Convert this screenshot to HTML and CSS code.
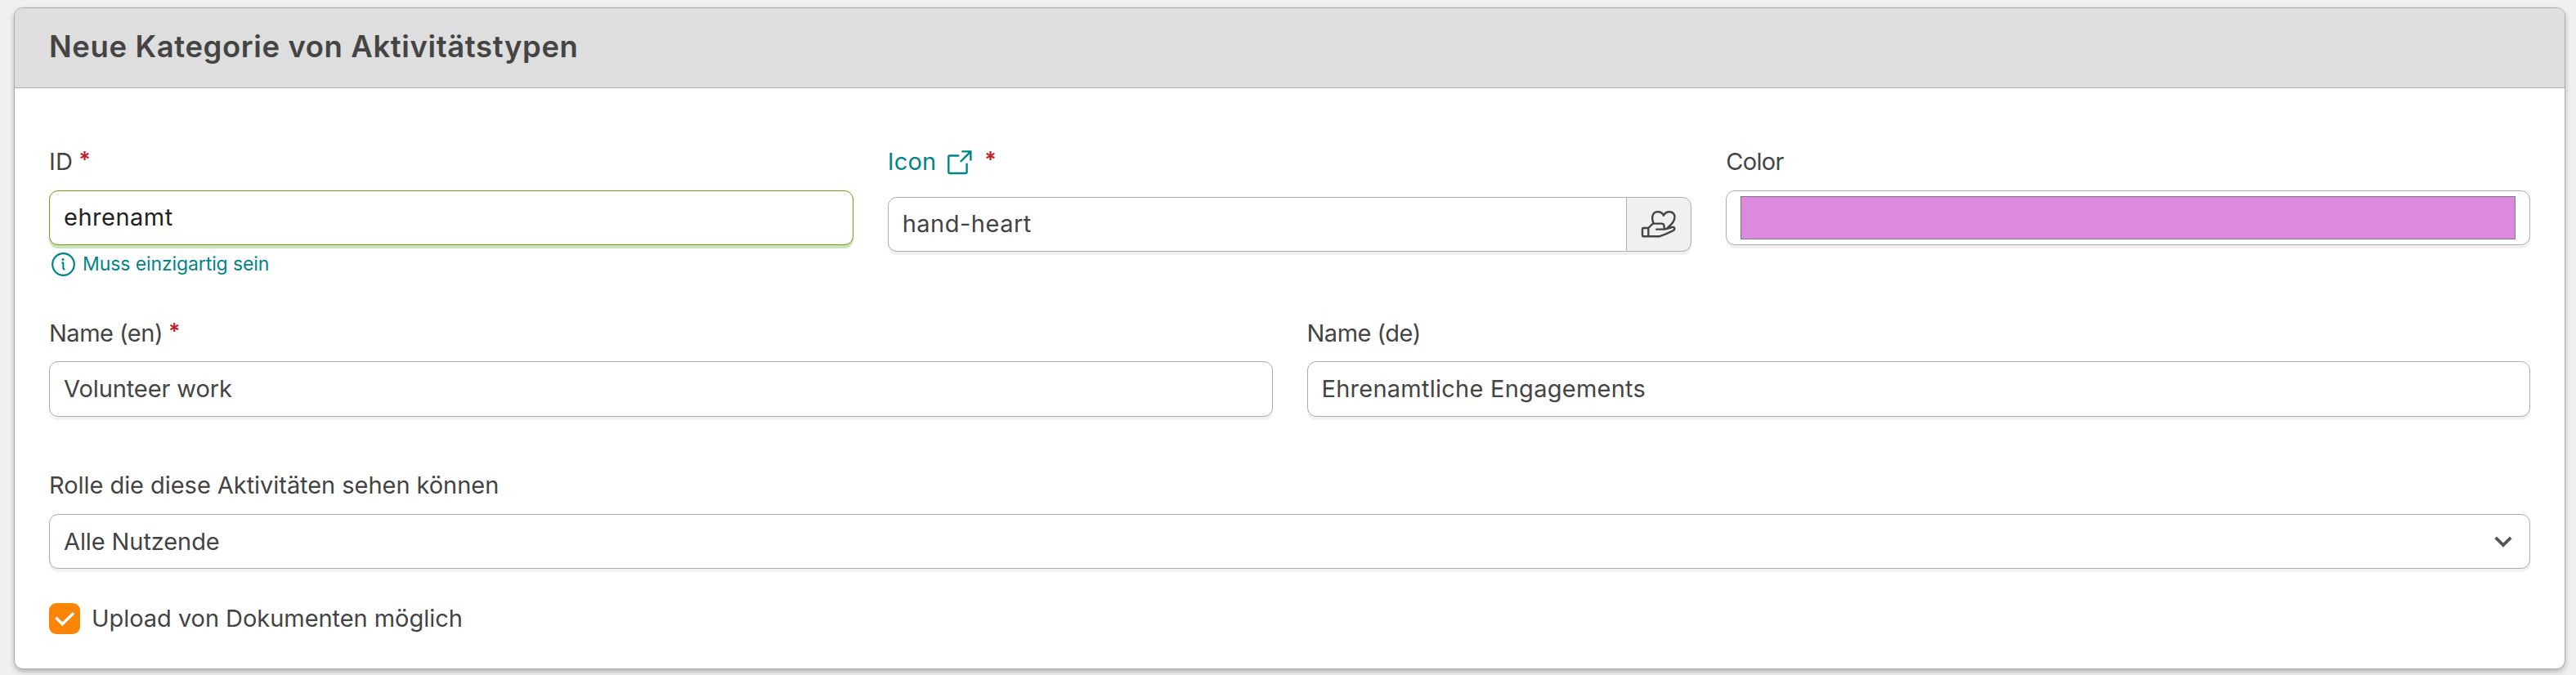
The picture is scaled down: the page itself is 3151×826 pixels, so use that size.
FILE: index.html
```html
<!DOCTYPE html>
<html lang="de">
<head>
<meta charset="utf-8">
<title>Neue Kategorie von Aktivitätstypen</title>
<link rel="stylesheet" href="styles.css">
</head>
<body>
<main class="card">
  <header class="card-header"><h1 class="card-title">Neue Kategorie von Aktivitätstypen</h1></header>
  <form class="card-body">
    <div class="row row-three">
      <div class="field">
        <div class="label"><span class="t-id">ID</span><span class="required">*</span></div>
        <div class="input input-focus"><span class="t-loose">ehrenamt</span></div>
        <div class="help">
          <svg class="info-icon" viewBox="0 0 29 29" fill="none" stroke="currentColor"><circle cx="14.5" cy="14.5" r="13.3" stroke-width="2.2"/><path d="M12.3 12.6h2v6.2q0 1.8 2 1.8" stroke-width="2"/><circle cx="14" cy="8.4" r="1.5" fill="currentColor" stroke="none"/></svg>
          <span class="t-help">Muss einzigartig sein</span>
        </div>
      </div>
      <div class="field">
        <div class="label label-icon"><a class="link t-icon">Icon</a>
          <svg class="external-icon" viewBox="0 0 30 30" fill="none" stroke="currentColor" stroke-width="2.4" stroke-linejoin="round"><path d="M14.3 6.5H2.5Q1.3 6.5 1.3 7.7V26.8Q1.3 28 2.5 28H22.4Q23.6 28 23.6 26.8V15.7"/><path d="M17.4 1.4H28.4V12.4M28.4 1.4L15.8 14" stroke-linejoin="miter"/></svg>
          <span class="required">*</span>
        </div>
        <div class="input-group">
          <div class="input"><span class="t-loose">hand-heart</span></div>
          <div class="addon">
            <svg class="hand-icon" viewBox="0 0 130 105" fill="none" stroke="currentColor" stroke-width="7.2" stroke-linejoin="round" stroke-linecap="round"><path d="M10 66H28V97H10Q6 97 6 93V70Q6 66 10 66ZM28 66L42 52Q44 50 47 50H76Q86 50 86 61V69M58 71H80Q88 71 94 69L115 63Q123 61 124 67Q125 73 118 76L92 88L68 97H28"/><path d="M47 48C42 41 41 26 45 17C52 3 76 2 84 20C93 2 118 3 124 20C127 38 117 48 99 65"/></svg>
          </div>
        </div>
      </div>
      <div class="field">
        <div class="label"><span class="t-color">Color</span></div>
        <div class="input color-input"><div class="swatch"></div></div>
      </div>
    </div>
    <div class="row row-two">
      <div class="field">
        <div class="label"><span class="t-name">Name (en)</span><span class="required">*</span></div>
        <div class="input"><span class="t-volunteer">Volunteer work</span></div>
      </div>
      <div class="field">
        <div class="label"><span class="t-name">Name (de)</span></div>
        <div class="input"><span class="t-wide">Ehrenamtliche Engagements</span></div>
      </div>
    </div>
    <div class="field">
      <div class="label t-body">Rolle die diese Aktivitäten sehen können</div>
      <div class="input select"><span class="t-volunteer">Alle Nutzende</span>
        <svg class="chevron" viewBox="0 0 22 14" fill="none" stroke="currentColor" stroke-width="3.8"><path d="M1.7 1.8L11 11L20.3 1.8"/></svg>
      </div>
    </div>
    <label class="check">
      <span class="box"><svg viewBox="0 0 38 38" fill="none" stroke="#fff" stroke-width="3.4"><path d="M8.5 17.8L16.2 25.8L30 12.2"/></svg></span>
      <span class="t-body">Upload von Dokumenten möglich</span>
    </label>
  </form>
</main>
</body>
</html>
```
FILE: styles.css
```css
* { box-sizing: border-box; }
body {
  margin: 0;
  padding: 9px 13px 0 17px;
  height: 826px;
  overflow: hidden;
  background: #f0f0f0;
  color: #444;
  font: 29px/40px Inter, "Liberation Sans", sans-serif;
}
.card {
  height: 810px;
  background: #fff;
  border: 1px solid #adadad;
  border-radius: 11px;
  overflow: hidden;
  box-shadow: 0 3px 6px rgba(0, 0, 0, .25);
}
.card-header {
  height: 98px;
  padding: 0 40px 0 42px;
  display: flex;
  align-items: center;
  background: #dedede;
  border-bottom: 1px solid #adadad;
}
.card-title {
  margin: 0 0 3px;
  font-size: 36.5px;
  font-weight: 600;
  letter-spacing: .6px;
  white-space: nowrap;
}
.card-body { padding: 69px 42px 0; }
.row { display: grid; column-gap: 42px; }
.row-three { grid-template-columns: repeat(3, minmax(0, 1fr)); height: 210px; }
.row-two { grid-template-columns: repeat(2, minmax(0, 1fr)); height: 186px; }
.label { height: 56px; padding-top: 1px; white-space: nowrap; }
.row-two .label { height: 55px; }
.row-two .input { height: 68px; }
.label-icon { display: flex; height: 64px; align-items: flex-start; }
.required {
  display: inline-block;
  margin-left: 7px;
  height: 36px;
  line-height: 36px;
  vertical-align: top;
  color: #bd1f2d;
  font-size: 27px;
  font-weight: 600;
}
.label-icon .required { margin-left: 15px; }
.link, .external-icon, .help { color: #008489; }
.external-icon { width: 30px; height: 30px; margin: 6px 0 0 14px; }
.input {
  height: 67px;
  padding: 0 17px;
  display: flex;
  align-items: center;
  background: #fff;
  border: 1px solid #adadad;
  border-radius: 11px;
  box-shadow: 0 4px 0 #f1f1f1;
}
.row-three .input { padding-bottom: 2px; }
.input-focus { color: #222; border-color: #68a019; box-shadow: 0 4px 0 #cfe2b5; }
.input-group { display: flex; }
.input-group .input { flex: 1; border-radius: 11px 0 0 11px; }
.addon {
  width: 80px;
  height: 67px;
  margin-left: -1px;
  padding: 15px 0 0 17px;
  background: #f0f0f0;
  border: 1px solid #adadad;
  border-radius: 0 11px 11px 0;
  box-shadow: 0 4px 0 #f1f1f1;
}
.hand-icon { display: block; width: 43.3px; height: 35px; }
.row-three .color-input { padding: 6px 17px; }
.swatch { flex: 1; height: 53px; background: #dc8ade; border: 1px solid #7d7d7d; }
.help { display: flex; align-items: center; height: 30px; margin-top: 8px; padding-left: 3px; gap: 9px; font-size: 23px; }
.info-icon { width: 29px; height: 29px; }
.select { justify-content: space-between; }
.chevron { width: 22px; height: 14px; margin-right: 4px; color: #555; }
.check { display: flex; align-items: center; gap: 14px; height: 38px; margin-top: 42px; }
.box { width: 38px; height: 38px; background: #f98406; border-radius: 9px; }
.box svg { display: block; }
.t-id { letter-spacing: .2px; }
.t-icon { letter-spacing: .2px; }
.t-loose { letter-spacing: .5px; }
.t-wide { letter-spacing: .25px; }
.t-volunteer { letter-spacing: -.1px; }
.t-name { letter-spacing: -.5px; }
.t-color { letter-spacing: -.7px; }
.t-body { letter-spacing: -.05px; }
.t-help { letter-spacing: -.1px; }
```
